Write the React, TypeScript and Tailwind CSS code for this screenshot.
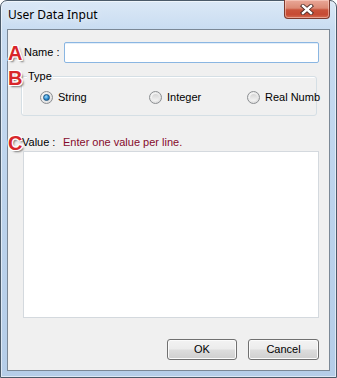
import React from "react";

const body = { fontFamily: '"Liberation Sans", Arial, sans-serif' } as const;

function Badge({ letter }: { letter: string }) {
  return (
    <span
      className="block text-[20px] font-bold leading-[16px] text-[#d8262b] [text-shadow:1px_0_0_#fff,-1px_0_0_#fff,0_1px_0_#fff,0_-1px_0_#fff,1px_1px_0_#fff,-1px_-1px_0_#fff,1px_-1px_0_#fff,-1px_1px_0_#fff,2px_2px_2px_#777]"
      style={body}
    >
      {letter}
    </span>
  );
}

function Radio({ checked }: { checked?: boolean }) {
  return (
    <span className="flex h-[13px] w-[13px] shrink-0 items-center justify-center rounded-full border border-[#8c8f92] bg-[radial-gradient(circle_at_40%_40%,#ffffff_0%,#e6e6e6_60%,#cfd0d1_100%)]">
      {checked ? (
        <span className="h-[7px] w-[7px] rounded-full border border-[#1c5480] bg-[radial-gradient(circle_at_40%_35%,#9fdcff_0%,#2a8bd0_55%,#0d5a96_100%)]" />
      ) : (
        <span className="h-[7px] w-[7px] rounded-full bg-[linear-gradient(to_bottom,#d6d6d6,#f4f4f4)]" />
      )}
    </span>
  );
}

function Btn({ label, w }: { label: string; w: string }) {
  return (
    <div
      className={`${w} flex h-[21px] items-center justify-center rounded-[3px] border border-[#707070] bg-[linear-gradient(to_bottom,#f3f3f3_0%,#ececec_48%,#dddddd_52%,#cfcfcf_100%)] text-[11px] text-black shadow-[inset_0_0_0_1px_#fbfbfb]`}
      style={body}
    >
      {label}
    </div>
  );
}

export default function App() {
  return (
    <div className="h-[378px] w-[337px] overflow-hidden bg-white">
      <div className="flex h-[378px] w-[337px] flex-col rounded-t-[7px] border border-[#4b5a69] bg-[linear-gradient(to_bottom,#dbe8f6_0px,#c8dcf1_30px,#bcd3ec_200px,#b5cde8_378px)] shadow-[inset_0_0_0_1px_rgba(255,255,255,0.55)]">
        {/* title bar */}
        <div className="flex h-[28px] shrink-0 items-start justify-between pl-[7px] pr-[6px]">
          <span
            className="mt-[6px] text-[12px] leading-[16px] text-black [text-shadow:0_0_6px_rgba(255,255,255,0.9)]"
            style={{ fontFamily: '"Noto Sans", "Liberation Sans", sans-serif' }}
          >
            User Data Input
          </span>
          <div className="relative -mt-px flex h-[19px] w-[46px] items-center justify-center rounded-b-[4px] border border-t-0 border-[#7d3a2e] bg-[linear-gradient(to_bottom,#e9a898_0%,#dc8a75_45%,#c9533b_55%,#c64a33_80%,#d36c52_100%)] shadow-[inset_0_0_0_1px_rgba(255,220,210,0.5)]">
            <svg width="14" height="11" viewBox="0 0 14 11">
              <path d="M3 2 L11 9 M11 2 L3 9" stroke="#4a2a25" strokeWidth="4.2" strokeLinecap="square" />
              <path d="M3 2 L11 9 M11 2 L3 9" stroke="#ffffff" strokeWidth="2.4" strokeLinecap="square" />
            </svg>
          </div>
        </div>

        {/* client area */}
        <div className="mx-[6px] mb-[6px] flex flex-1 flex-col border border-[#7b8896] bg-[#f0f0f0]" style={body}>
          {/* Name row */}
          <div className="mt-[12px] flex h-[21px] items-center">
            <div className="w-[16px]">
              <Badge letter="A" />
            </div>
            <span className="w-[40px] text-[11px] text-black">Name :</span>
            <div className="mr-[10px] h-[21px] flex-1 rounded-[2px] border border-[#8ab6e2] bg-white shadow-[inset_0_1px_0_#e3eef9]" />
          </div>

          {/* Type group */}
          <div className="relative mt-[6px] pl-[13px] pr-[12px] pt-[7px]">
            <div className="absolute left-0 top-[1px]">
              <Badge letter="B" />
            </div>
            <span className="absolute left-[19px] top-0 bg-[#f0f0f0] px-[1px] text-[11px] leading-[14px] text-black">
              Type
            </span>
            <div className="flex h-[40px] items-center rounded-[3px] border border-[#d5dfe5] pl-[18px] pt-[3px] shadow-[inset_1px_1px_0_#ffffff]">
              <div className="flex w-[109px] shrink-0 items-center gap-[5px]">
                <Radio checked />
                <span className="text-[11px] text-black">String</span>
              </div>
              <div className="flex w-[98px] shrink-0 items-center gap-[5px]">
                <Radio />
                <span className="text-[11px] text-black">Integer</span>
              </div>
              <div className="flex shrink-0 items-center gap-[5px]">
                <Radio />
                <span className="whitespace-nowrap text-[11px] text-black">Real Numb</span>
              </div>
            </div>
          </div>

          {/* Value row */}
          <div className="mt-[18px] flex h-[17px] items-center">
            <div className="w-[14px]">
              <Badge letter="C" />
            </div>
            <span className="w-[41px] text-[11px] text-black">Value :</span>
            <span className="text-[11px] text-[#860a2c]">Enter one value per line.</span>
          </div>

          {/* Textarea */}
          <div className="ml-[15px] mr-[10px] h-[167px] border border-[#d4d9de] bg-white" />

          {/* Buttons */}
          <div className="mr-[10px] mt-[21px] flex justify-end gap-[11px]">
            <Btn label="OK" w="w-[70px]" />
            <Btn label="Cancel" w="w-[71px]" />
          </div>
        </div>
      </div>
    </div>
  );
}
